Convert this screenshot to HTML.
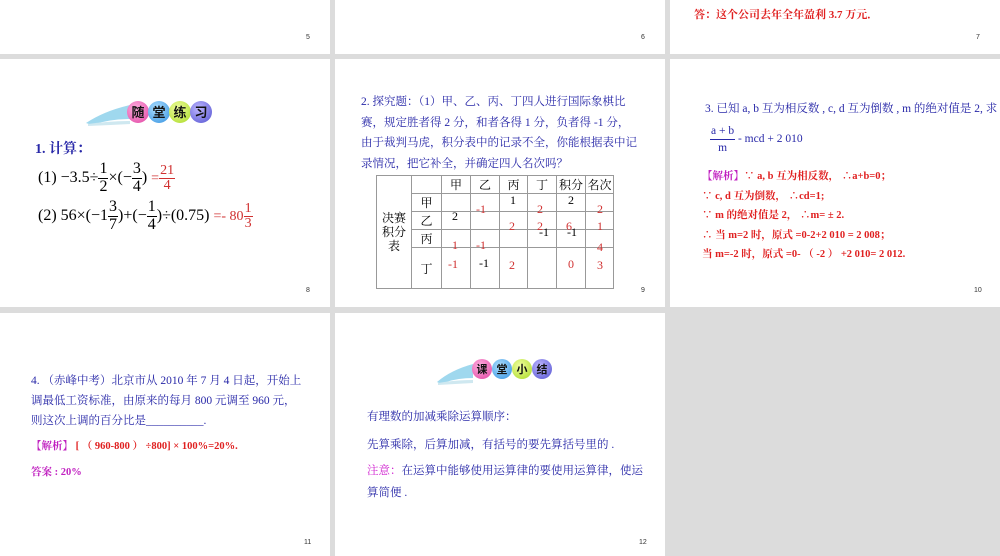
<!DOCTYPE html>
<html><head><meta charset="utf-8"><style>
*{margin:0;padding:0;box-sizing:border-box}
body{width:1000px;height:556px;background:#dcdcdc;position:relative;overflow:hidden;font-family:"Liberation Serif","Noto Serif CJK SC","Noto Sans CJK SC",serif}
.s{position:absolute;background:#fff;overflow:hidden}
.t{position:absolute;white-space:nowrap}
.pn{position:absolute;font:7px "Liberation Sans",sans-serif;color:#333}
.b{color:#2828a8}
.r{color:#e02020;font-weight:bold}
.p{color:#c020c0;font-weight:bold}
.fr{display:inline-block;vertical-align:middle;text-align:center;line-height:1.05}
.fr span{display:block}
.fr .n{border-bottom:1px solid currentColor;padding:0 1px}
table{border-collapse:collapse;position:absolute;left:41px;top:116px;font-size:12px}
td{border:1px solid #999;height:16px;text-align:center;padding:0}
.c{position:absolute;font-size:12px}
.rd{color:#d03030}
.bk{color:#000}
.ball{position:absolute;border-radius:50%;width:22px;height:22px;text-align:center;line-height:22px;font-family:"Noto Sans CJK SC",sans-serif;font-weight:bold;font-size:13px;color:#111}
</style></head><body>

<div class="s" style="left:0;top:0;width:330px;height:54px"><div class="pn" style="left:306px;top:34px">5</div></div>
<div class="s" style="left:335px;top:0;width:330px;height:54px"><div class="pn" style="left:306px;top:34px">6</div></div>
<div class="s" style="left:670px;top:0;width:330px;height:54px">
<div class="t r" style="left:24px;top:6px;font-size:11px">答：这个公司去年全年盈利 3.7 万元．</div>
<div class="pn" style="left:306px;top:34px">7</div></div>

<div class="s" style="left:0;top:59px;width:330px;height:248px">
<svg style="position:absolute;left:84px;top:38px" width="50" height="30"><path d="M2 26 Q20 14 46 8 L46 22 Q25 22 8 28Z" fill="#9fd8ee"/><path d="M4 27 Q25 24 46 24 L46 27 Q25 28 4 29Z" fill="#cfe8f0"/></svg>
<div class="ball" style="left:127px;top:42px;background:radial-gradient(circle at 40% 35%,#ffb0e0,#e040a0)">随</div>
<div class="ball" style="left:148px;top:42px;background:radial-gradient(circle at 40% 35%,#b0e0ff,#3090e0)">堂</div>
<div class="ball" style="left:169px;top:42px;background:radial-gradient(circle at 40% 35%,#f0ffa0,#a8d820)">练</div>
<div class="ball" style="left:190px;top:42px;background:radial-gradient(circle at 40% 35%,#c0b8ff,#5050d0)">习</div>
<div class="t b" style="left:35px;top:79px;font-size:14px;font-weight:bold">1. 计算：</div>
<div class="t" style="left:38px;top:102px;font-size:16px">(1) −3.5÷<span class="fr"><span class="n">1</span><span>2</span></span>×(−<span class="fr"><span class="n">3</span><span>4</span></span>) <span class="rd" style="font-size:14px">=<span class="fr"><span class="n">21</span><span>4</span></span></span></div>
<div class="t" style="left:38px;top:140px;font-size:16px">(2) 56×(−1<span class="fr"><span class="n">3</span><span>7</span></span>)+(−<span class="fr"><span class="n">1</span><span>4</span></span>)÷(0.75) <span class="rd" style="font-size:14px">=- 80<span class="fr"><span class="n">1</span><span>3</span></span></span></div>
<div class="pn" style="left:306px;top:228px">8</div></div>

<div class="s" style="left:335px;top:59px;width:330px;height:248px">
<div class="t b" style="left:26px;top:33px;font-size:11.5px;line-height:20.5px">2. 探究题：（1）甲、乙、丙、丁四人进行国际象棋比<br>赛，规定胜者得 2 分，和者各得 1 分，负者得 -1 分，<br>由于裁判马虎，积分表中的记录不全，你能根据表中记<br>录情况，把它补全，并确定四人名次吗？</div>
<table>
<tr><td rowspan="5" style="width:35px;line-height:14px">决赛<br>积分<br>表</td><td style="width:30px;height:18px"></td><td style="width:29px">甲</td><td style="width:29px">乙</td><td style="width:28px">丙</td><td style="width:29px">丁</td><td style="width:29px">积分</td><td style="width:28px">名次</td></tr>
<tr><td>甲</td><td></td><td></td><td></td><td></td><td></td><td></td></tr>
<tr><td>乙</td><td></td><td></td><td></td><td></td><td></td><td></td></tr>
<tr><td>丙</td><td></td><td></td><td></td><td></td><td></td><td></td></tr>
<tr><td style="height:41px">丁</td><td></td><td></td><td></td><td></td><td></td><td></td></tr>
</table>
<div class="c bk" style="left:175px;top:134px">1</div><div class="c bk" style="left:233px;top:134px">2</div>
<div class="c bk" style="left:117px;top:150px">2</div>
<div class="c rd" style="left:141px;top:143px">-1</div><div class="c rd" style="left:202px;top:143px">2</div><div class="c rd" style="left:262px;top:143px">2</div>
<div class="c rd" style="left:174px;top:160px">2</div><div class="c rd" style="left:202px;top:160px">2</div><div class="c rd" style="left:231px;top:160px">6</div><div class="c rd" style="left:262px;top:160px">1</div>
<div class="c bk" style="left:204px;top:166px">-1</div><div class="c bk" style="left:232px;top:166px">-1</div>
<div class="c rd" style="left:117px;top:179px">1</div><div class="c rd" style="left:141px;top:179px">-1</div><div class="c rd" style="left:262px;top:181px">4</div>
<div class="c rd" style="left:113px;top:198px">-1</div><div class="c bk" style="left:144px;top:197px">-1</div><div class="c rd" style="left:174px;top:199px">2</div><div class="c rd" style="left:233px;top:198px">0</div><div class="c rd" style="left:262px;top:199px">3</div>
<div class="pn" style="left:306px;top:228px">9</div></div>

<div class="s" style="left:670px;top:59px;width:330px;height:248px">
<div class="t b" style="left:35px;top:41px;font-size:11.5px">3. 已知 a, b 互为相反数 , c, d 互为倒数 , m 的绝对值是 2, 求</div>
<div class="t b" style="left:40px;top:64px;font-size:11.5px"><span class="fr" style="line-height:1.4"><span class="n">a + b</span><span>m</span></span> - mcd + 2 010</div>
<div class="t r" style="left:32px;top:108px;font-size:10.5px;line-height:19.6px"><span class="p">【解析】</span>∵ a, b 互为相反数， ∴a+b=0；<br>∵ c, d 互为倒数， ∴cd=1;<br>∵ m 的绝对值是 2， ∴m= ± 2.<br>∴ 当 m=2 时，原式 =0-2+2 010 = 2 008；<br>当 m=-2 时，原式 =0- （ -2 ） +2 010= 2 012.</div>
<div class="pn" style="left:304px;top:228px">10</div></div>

<div class="s" style="left:0;top:313px;width:330px;height:243px">
<div class="t b" style="left:31px;top:58px;font-size:11.5px;line-height:20px">4. （赤峰中考）北京市从 2010 年 7 月 4 日起，开始上<br>调最低工资标准，由原来的每月 800 元调至 960 元，<br>则这次上调的百分比是__________.</div>
<div class="t r" style="left:31px;top:125px;font-size:10.5px"><span class="p">【解析】</span> [ （ 960-800 ） ÷800] × 100%=20%.</div>
<div class="t p" style="left:31px;top:151px;font-size:10.5px">答案 : 20%</div>
<div class="pn" style="left:304px;top:226px">11</div></div>

<div class="s" style="left:335px;top:313px;width:330px;height:243px">
<svg style="position:absolute;left:100px;top:45px" width="40" height="28"><path d="M2 24 Q16 12 38 6 L38 20 Q20 20 6 26Z" fill="#9fd8ee"/><path d="M3 25 Q20 22 38 22 L38 25 Q20 26 3 27Z" fill="#cfe8f0"/></svg>
<div class="ball" style="left:137px;top:46px;width:20px;height:20px;line-height:20px;font-size:11px;background:radial-gradient(circle at 40% 35%,#ffb0e0,#e040a0)">课</div>
<div class="ball" style="left:157px;top:46px;width:20px;height:20px;line-height:20px;font-size:11px;background:radial-gradient(circle at 40% 35%,#b0e0ff,#3090e0)">堂</div>
<div class="ball" style="left:177px;top:46px;width:20px;height:20px;line-height:20px;font-size:11px;background:radial-gradient(circle at 40% 35%,#f0ffa0,#a8d820)">小</div>
<div class="ball" style="left:197px;top:46px;width:20px;height:20px;line-height:20px;font-size:11px;background:radial-gradient(circle at 40% 35%,#c0b8ff,#5050d0)">结</div>
<div class="t b" style="left:32px;top:95px;font-size:11.5px">有理数的加减乘除运算顺序：</div>
<div class="t b" style="left:32px;top:123px;font-size:11.5px">先算乘除，后算加减，有括号的要先算括号里的 .</div>
<div class="t b" style="left:32px;top:147px;font-size:11.5px;line-height:22px"><span style="color:#d020d0">注意：</span>在运算中能够使用运算律的要使用运算律，使运<br>算简便 .</div>
<div class="pn" style="left:304px;top:226px">12</div></div>

</body></html>
